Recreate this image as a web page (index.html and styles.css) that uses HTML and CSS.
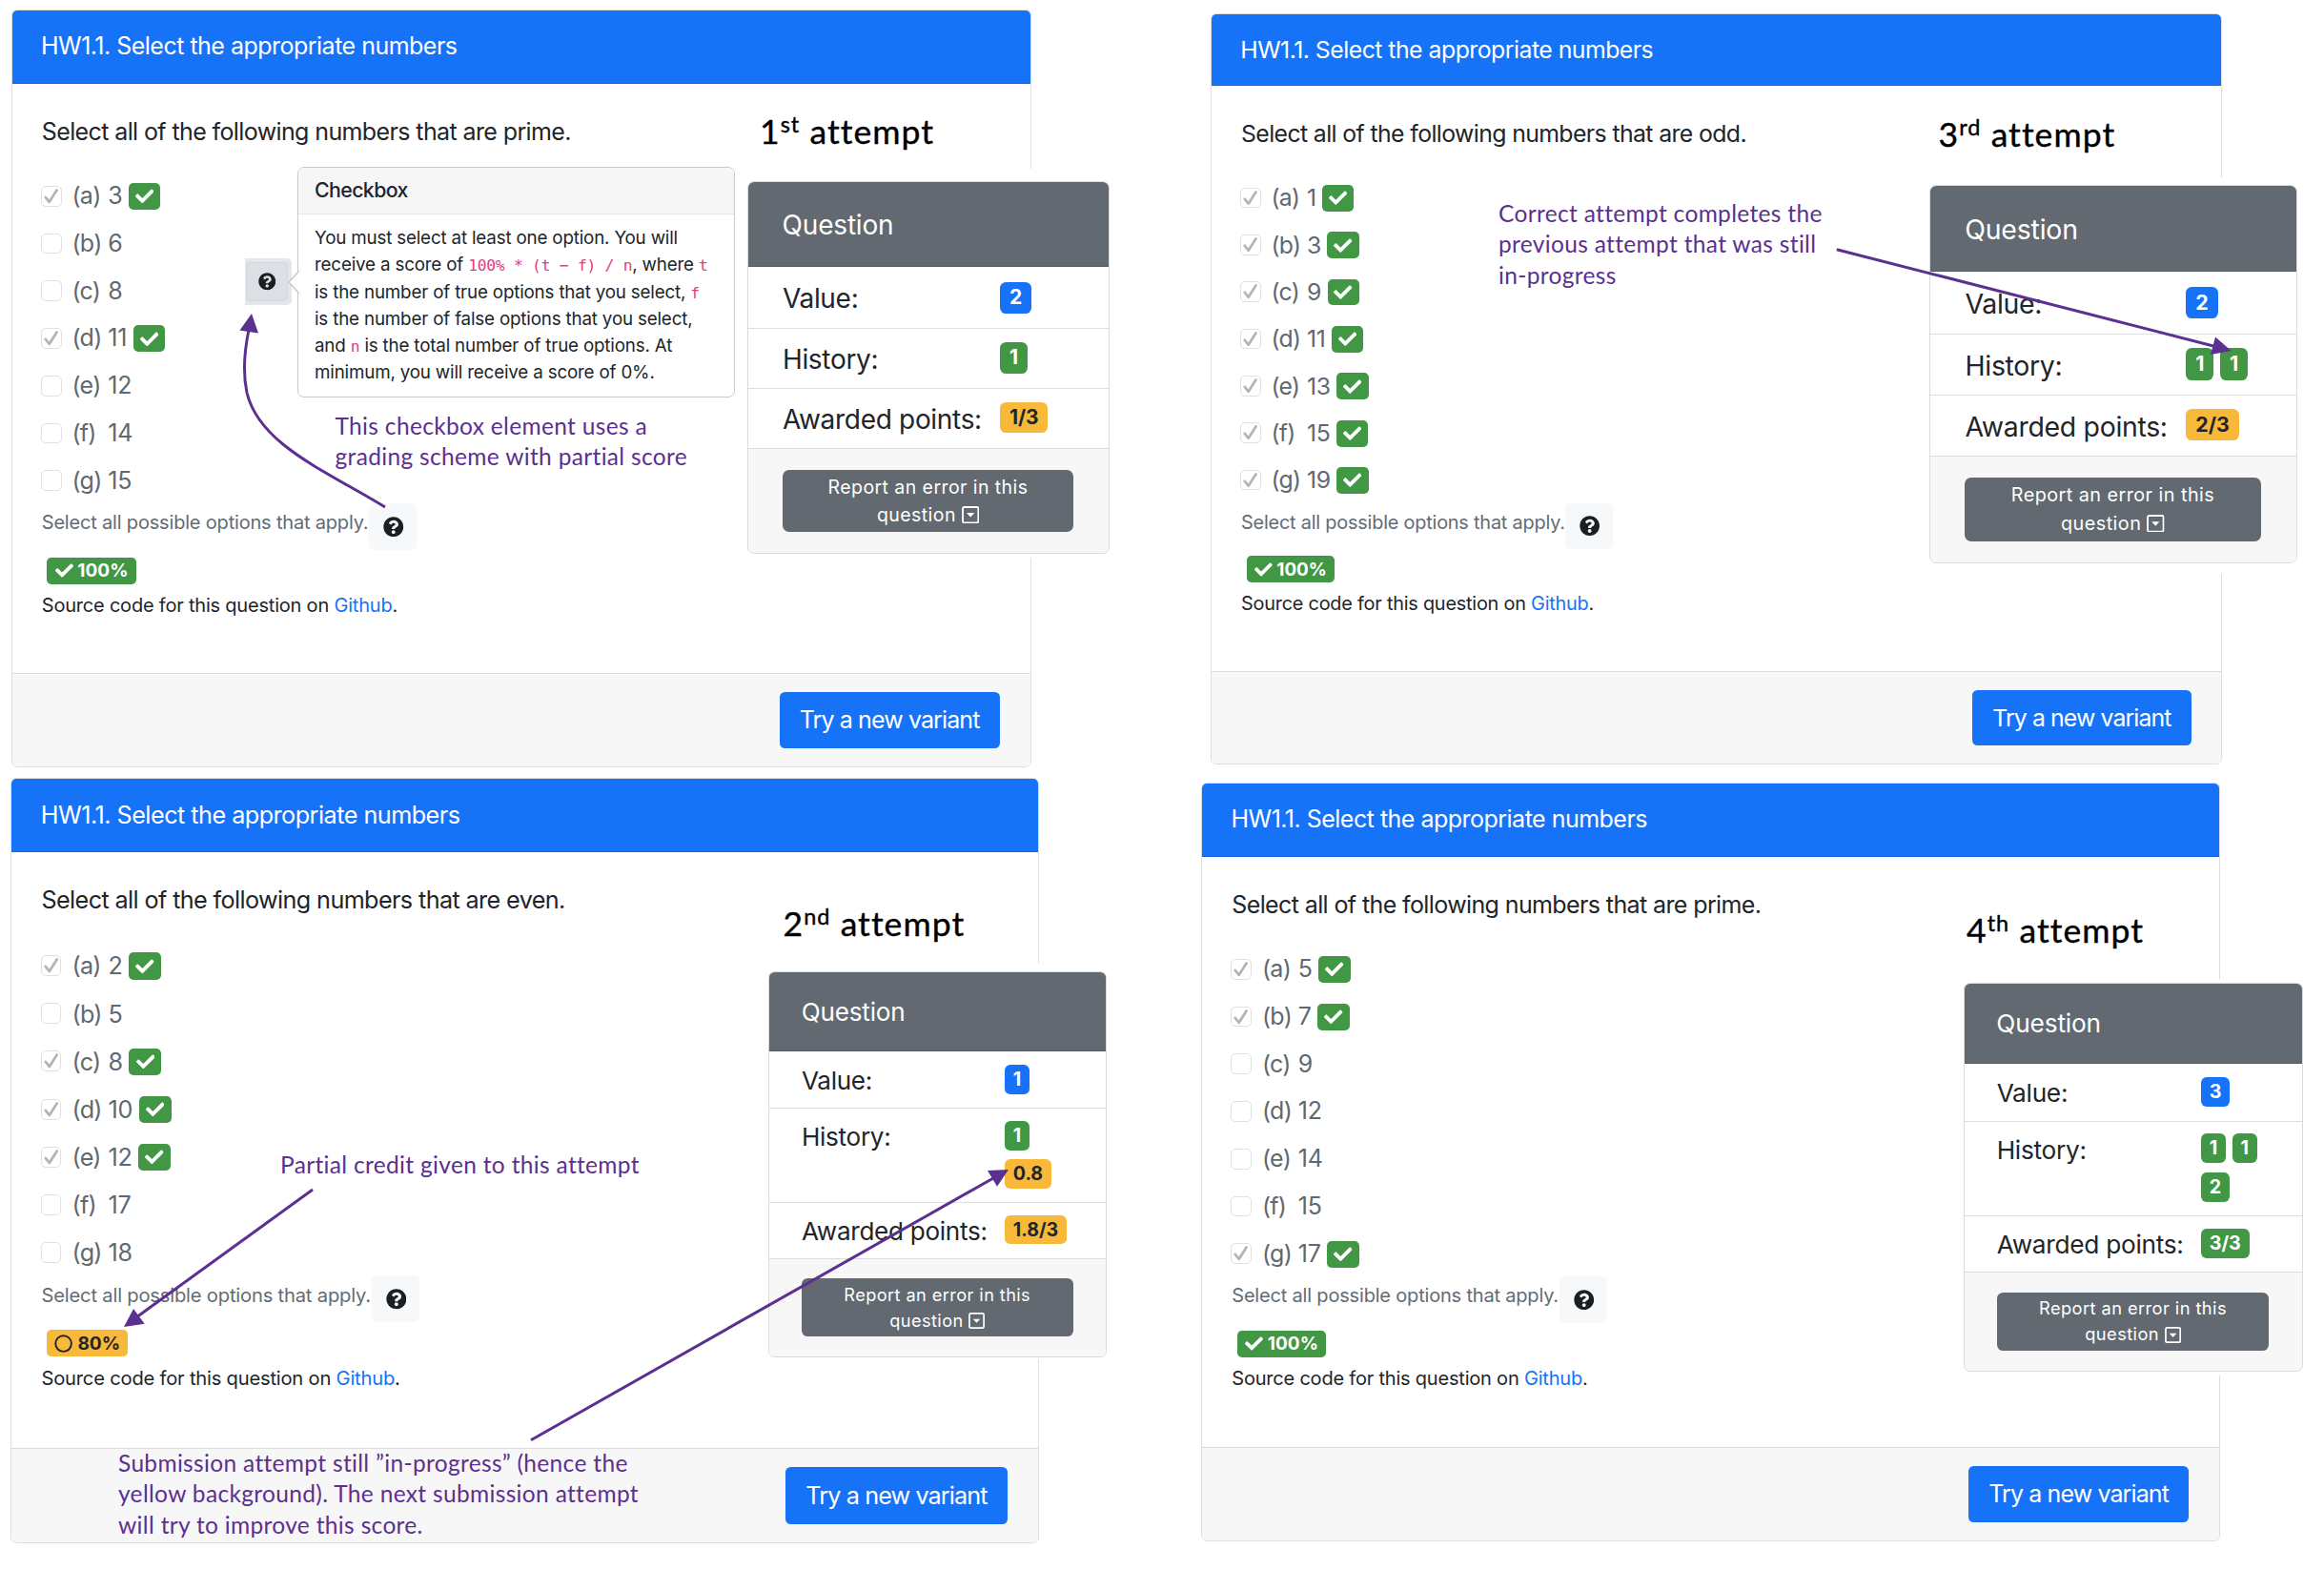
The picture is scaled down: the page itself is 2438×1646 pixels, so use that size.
FILE: index.html
```html
<!DOCTYPE html>
<html lang="en">
<head>
<meta charset="utf-8">
<title>HW1.1 attempts</title>
<link rel="stylesheet" href="styles.css">
</head>
<body>
<svg class="defs" aria-hidden="true">
  <symbol id="check" viewBox="0 0 512 512"><path d="M173.898 439.404l-166.4-166.4c-9.997-9.997-9.997-26.206 0-36.204l36.203-36.204c9.997-9.998 26.207-9.998 36.204 0L192 312.69 432.095 72.596c9.997-9.997 26.207-9.997 36.204 0l36.203 36.204c9.997 9.997 9.997 26.206 0 36.204l-294.4 294.401c-9.998 9.997-26.207 9.997-36.204-.001z" fill="currentColor"/></symbol>
  <symbol id="help" viewBox="0 0 512 512"><path d="M504 256c0 136.997-111.043 248-248 248S8 392.997 8 256C8 119.083 119.043 8 256 8s248 111.083 248 248zM262.655 90c-54.497 0-89.255 22.957-116.549 63.758-3.536 5.286-2.353 12.415 2.715 16.258l34.699 26.31c5.205 3.947 12.621 3.008 16.665-2.122 17.864-22.658 30.113-35.797 57.303-35.797 20.429 0 45.698 13.148 45.698 32.958 0 14.976-12.363 22.667-32.534 33.976C247.128 238.528 216 254.941 216 296v4c0 6.627 5.373 12 12 12h56c6.627 0 12-5.373 12-12v-1.333c0-28.462 83.186-29.647 83.186-106.667 0-58.002-60.165-102-116.531-102zM256 338c-25.365 0-46 20.635-46 46 0 25.364 20.635 46 46 46s46-20.636 46-46c0-25.364-20.635-46-46-46z" fill="currentColor"/></symbol>
  <symbol id="ring" viewBox="0 0 20 20"><circle cx="10" cy="10" r="8.7" fill="none" stroke="currentColor" stroke-width="2"/></symbol>
  <symbol id="caret" viewBox="0 0 18 18"><rect x="1" y="1" width="16" height="16" rx="1.5" fill="none" stroke="currentColor" stroke-width="1.8"/><path d="M5 7h8l-4 4.4z" fill="currentColor"/></symbol>
  <symbol id="tick" viewBox="1 1 20 20"><path d="M4.8 12L8.8 17 16.8 4.6" fill="none" stroke="#b4b4b4" stroke-width="2.8" stroke-linecap="round" stroke-linejoin="round"/></symbol>
</svg>

<main class="board">

  <section class="card card-1">
    <header class="card-head">HW1.1. Select the appropriate numbers</header>
    <div class="card-body">
      <p class="prompt">Select all of the following numbers that are prime.</p>
      <ul class="options">
        <li><span class="box"><svg><use href="#tick"/></svg></span><span class="key">(a)</span><span>3</span><b class="ok"><svg><use href="#check"/></svg></b></li>
        <li><span class="box"></span><span class="key">(b)</span><span>6</span></li>
        <li><span class="box"></span><span class="key">(c)</span><span>8</span></li>
        <li><span class="box"><svg><use href="#tick"/></svg></span><span class="key">(d)</span><span>11</span><b class="ok"><svg><use href="#check"/></svg></b></li>
        <li><span class="box"></span><span class="key">(e)</span><span>12</span></li>
        <li><span class="box"></span><span class="key">(f)</span><span>14</span></li>
        <li><span class="box"></span><span class="key">(g)</span><span>15</span></li>
      </ul>
      <div class="hint"><span>Select all possible options that apply.</span><button class="help"><svg><use href="#help"/></svg></button></div>
      <span class="score"><svg><use href="#check"/></svg>100%</span>
      <p class="source">Source code for this question on <a>Github</a>.</p>
    </div>
    <footer class="card-foot"><button class="try">Try a new variant</button></footer>
  </section>

  <section class="card card-2">
    <header class="card-head">HW1.1. Select the appropriate numbers</header>
    <div class="card-body">
      <p class="prompt">Select all of the following numbers that are even.</p>
      <ul class="options">
        <li><span class="box"><svg><use href="#tick"/></svg></span><span class="key">(a)</span><span>2</span><b class="ok"><svg><use href="#check"/></svg></b></li>
        <li><span class="box"></span><span class="key">(b)</span><span>5</span></li>
        <li><span class="box"><svg><use href="#tick"/></svg></span><span class="key">(c)</span><span>8</span><b class="ok"><svg><use href="#check"/></svg></b></li>
        <li><span class="box"><svg><use href="#tick"/></svg></span><span class="key">(d)</span><span>10</span><b class="ok"><svg><use href="#check"/></svg></b></li>
        <li><span class="box"><svg><use href="#tick"/></svg></span><span class="key">(e)</span><span>12</span><b class="ok"><svg><use href="#check"/></svg></b></li>
        <li><span class="box"></span><span class="key">(f)</span><span>17</span></li>
        <li><span class="box"></span><span class="key">(g)</span><span>18</span></li>
      </ul>
      <div class="hint"><span>Select all possible options that apply.</span><button class="help"><svg><use href="#help"/></svg></button></div>
      <span class="score warn"><svg><use href="#ring"/></svg>80%</span>
      <p class="source">Source code for this question on <a>Github</a>.</p>
    </div>
    <footer class="card-foot"><button class="try">Try a new variant</button></footer>
  </section>

  <section class="card card-3">
    <header class="card-head">HW1.1. Select the appropriate numbers</header>
    <div class="card-body">
      <p class="prompt">Select all of the following numbers that are odd.</p>
      <ul class="options">
        <li><span class="box"><svg><use href="#tick"/></svg></span><span class="key">(a)</span><span>1</span><b class="ok"><svg><use href="#check"/></svg></b></li>
        <li><span class="box"><svg><use href="#tick"/></svg></span><span class="key">(b)</span><span>3</span><b class="ok"><svg><use href="#check"/></svg></b></li>
        <li><span class="box"><svg><use href="#tick"/></svg></span><span class="key">(c)</span><span>9</span><b class="ok"><svg><use href="#check"/></svg></b></li>
        <li><span class="box"><svg><use href="#tick"/></svg></span><span class="key">(d)</span><span>11</span><b class="ok"><svg><use href="#check"/></svg></b></li>
        <li><span class="box"><svg><use href="#tick"/></svg></span><span class="key">(e)</span><span>13</span><b class="ok"><svg><use href="#check"/></svg></b></li>
        <li><span class="box"><svg><use href="#tick"/></svg></span><span class="key">(f)</span><span>15</span><b class="ok"><svg><use href="#check"/></svg></b></li>
        <li><span class="box"><svg><use href="#tick"/></svg></span><span class="key">(g)</span><span>19</span><b class="ok"><svg><use href="#check"/></svg></b></li>
      </ul>
      <div class="hint"><span>Select all possible options that apply.</span><button class="help"><svg><use href="#help"/></svg></button></div>
      <span class="score"><svg><use href="#check"/></svg>100%</span>
      <p class="source">Source code for this question on <a>Github</a>.</p>
    </div>
    <footer class="card-foot"><button class="try">Try a new variant</button></footer>
  </section>

  <section class="card card-4">
    <header class="card-head">HW1.1. Select the appropriate numbers</header>
    <div class="card-body">
      <p class="prompt">Select all of the following numbers that are prime.</p>
      <ul class="options">
        <li><span class="box"><svg><use href="#tick"/></svg></span><span class="key">(a)</span><span>5</span><b class="ok"><svg><use href="#check"/></svg></b></li>
        <li><span class="box"><svg><use href="#tick"/></svg></span><span class="key">(b)</span><span>7</span><b class="ok"><svg><use href="#check"/></svg></b></li>
        <li><span class="box"></span><span class="key">(c)</span><span>9</span></li>
        <li><span class="box"></span><span class="key">(d)</span><span>12</span></li>
        <li><span class="box"></span><span class="key">(e)</span><span>14</span></li>
        <li><span class="box"></span><span class="key">(f)</span><span>15</span></li>
        <li><span class="box"><svg><use href="#tick"/></svg></span><span class="key">(g)</span><span>17</span><b class="ok"><svg><use href="#check"/></svg></b></li>
      </ul>
      <div class="hint"><span>Select all possible options that apply.</span><button class="help"><svg><use href="#help"/></svg></button></div>
      <span class="score"><svg><use href="#check"/></svg>100%</span>
      <p class="source">Source code for this question on <a>Github</a>.</p>
    </div>
    <footer class="card-foot"><button class="try">Try a new variant</button></footer>
  </section>

  <div class="mat mat-1">
    <aside class="panel">
      <header class="panel-head">Question</header>
      <div class="row first"><span class="label">Value:</span><span class="vals"><b class="tag blue">2</b></span></div>
      <div class="row"><span class="label">History:</span><span class="vals"><b class="tag">1</b></span></div>
      <div class="row"><span class="label">Awarded points:</span><span class="vals"><b class="tag yellow">1/3</b></span></div>
      <footer class="panel-foot"><button class="report">Report an error in this<br>question <svg><use href="#caret"/></svg></button></footer>
    </aside>
  </div>

  <div class="mat mat-2">
    <aside class="panel">
      <header class="panel-head">Question</header>
      <div class="row first"><span class="label">Value:</span><span class="vals"><b class="tag blue">1</b></span></div>
      <div class="row"><span class="label">History:</span><span class="vals"><b class="tag">1</b><b class="tag yellow">0.8</b></span></div>
      <div class="row"><span class="label">Awarded points:</span><span class="vals"><b class="tag yellow">1.8/3</b></span></div>
      <footer class="panel-foot"><button class="report">Report an error in this<br>question <svg><use href="#caret"/></svg></button></footer>
    </aside>
  </div>

  <div class="mat mat-3">
    <aside class="panel">
      <header class="panel-head">Question</header>
      <div class="row first"><span class="label">Value:</span><span class="vals"><b class="tag blue">2</b></span></div>
      <div class="row"><span class="label">History:</span><span class="vals"><b class="tag">1</b><b class="tag">1</b></span></div>
      <div class="row"><span class="label">Awarded points:</span><span class="vals"><b class="tag yellow">2/3</b></span></div>
      <footer class="panel-foot"><button class="report">Report an error in this<br>question <svg><use href="#caret"/></svg></button></footer>
    </aside>
  </div>

  <div class="mat mat-4">
    <aside class="panel">
      <header class="panel-head">Question</header>
      <div class="row first"><span class="label">Value:</span><span class="vals"><b class="tag blue">3</b></span></div>
      <div class="row"><span class="label">History:</span><span class="vals"><b class="tag">1</b><b class="tag">1</b><b class="tag">2</b></span></div>
      <div class="row"><span class="label">Awarded points:</span><span class="vals"><b class="tag">3/3</b></span></div>
      <footer class="panel-foot"><button class="report">Report an error in this<br>question <svg><use href="#caret"/></svg></button></footer>
    </aside>
  </div>

  <button class="popover-btn"><span><svg><use href="#help"/></svg></span></button>
  <div class="popover">
    <header>Checkbox</header>
    <p>You must select at least one option. You will<br>receive a score of <code>100% * (t − f) / n</code>, where <code>t</code><br>is the number of true options that you select, <code>f</code><br>is the number of false options that you select,<br>and <code>n</code> is the total number of true options. At<br>minimum, you will receive a score of 0%.</p>
    <svg class="tip" viewBox="0 0 12 24"><path d="M12 0L1 12l11 12z" fill="#fff"/><path d="M12 0L1 12l11 12" fill="none" stroke="#c6c6c6" stroke-width="1.4"/></svg>
  </div>

  <h2 class="nth nth-1">1<sup>st</sup> attempt</h2>
  <h2 class="nth nth-2">2<sup>nd</sup> attempt</h2>
  <h2 class="nth nth-3">3<sup>rd</sup> attempt</h2>
  <h2 class="nth nth-4">4<sup>th</sup> attempt</h2>

  <p class="note note-1">This checkbox element uses a<br>grading scheme with partial score</p>
  <p class="note note-2">Partial credit given to this attempt</p>
  <p class="note note-3">Submission attempt still ”in-progress” (hence the<br>yellow background). The next submission attempt<br>will try to improve this score.</p>
  <p class="note note-4">Correct attempt completes the<br>previous attempt that was still<br>in-progress</p>

  <svg class="arrows" viewBox="0 0 2438 1646">
    <path class="line" d="M404 532C340 493 272 466 259 412C255 393 256 370 261 346"/>
    <path class="tip-fill" d="M264 329L251.5 346.5L271 349.5z"/>
    <path class="line" d="M328 1248L143 1382"/>
    <path class="tip-fill" d="M130 1392L140 1373L151.7 1388.7z"/>
    <path class="line" d="M557 1510.7L1042 1236"/>
    <path class="tip-fill" d="M1058 1227L1036 1228L1046 1244.7z"/>
    <path class="line" d="M1926.8 261.7L2322 363"/>
    <path class="tip-fill" d="M2340.7 368L2324 353.5L2319 372z"/>
  </svg>
</main>
</body>
</html>
```
FILE: styles.css
```css
* { box-sizing: border-box; }
body { margin: 0; background: #fff; font-family: Inter, "Liberation Sans", sans-serif; color: #212529; }
.board { position: relative; width: 2438px; height: 1646px; overflow: hidden; }
.defs { position: absolute; width: 0; height: 0; }
button { font-family: inherit; border: 0; padding: 0; margin: 0; }
p, ul, h2 { margin: 0; padding: 0; }
svg { display: block; }

/* Question cards */
.card { position: absolute; display: flex; flex-direction: column; background: #fff; border: 1.6px solid #dedede; border-radius: .25em; }
.card-1 { left: 11.5px; top: 10px; width: 1070px; height: 794.5px; font-size: 25px; }
.card-2 { left: 11px; top: 816px; width: 1079px; height: 802.5px; font-size: 25.2px; }
.card-3 { left: 1270px; top: 13.5px; width: 1061px; height: 788px; font-size: 24.8px; }
.card-4 { left: 1260px; top: 821px; width: 1069px; height: 795.5px; font-size: 25px; }
.card-head { height: 3.06em; line-height: 3.02em; padding-left: 1.22em; color: #fff; background: #1673f8; border-bottom: 1.6px solid #1566d9; border-radius: .2em .2em 0 0; letter-spacing: -.0205em; }
.card-body { flex: 1; display: flex; flex-direction: column; align-items: flex-start; padding: 1.28em 0 0 1.25em; }
.prompt { line-height: 1.5em; letter-spacing: -.0244em; white-space: nowrap; }
.options { list-style: none; margin-top: .965em; }
.options li { display: flex; align-items: center; height: 1.99em; line-height: 1.99em; color: #5f6971; letter-spacing: -.03em; }
.box { width: .87em; height: .87em; margin: -.03em .44em 0 -.04em; background: #fff; border: 1.5px solid #e0e0e0; border-radius: .2em; }
.box svg { width: 100%; height: 100%; overflow: visible; }
.key { width: 1.51em; }
.key + span { letter-spacing: -.01em; }
.ok { display: flex; align-items: center; justify-content: center; width: 1.34em; height: 1.12em; margin-left: .26em; border-radius: .2em; background: #429745; color: #fff; }
.ok svg { width: .78em; height: .78em; }
.hint { display: flex; height: 1.94em; margin-top: -.04em; color: #636c74; }
.hint span { font-size: .8em; line-height: 2.05em; letter-spacing: -.0092em; white-space: nowrap; }
.help { width: 2em; height: 1.94em; margin-left: .03em; font-size: 1em; border-radius: .2em; background: #f7f8fa; color: #1c1f22; display: flex; align-items: center; justify-content: center; }
.help svg { width: .86em; height: .86em; margin-left: .05em; }
.score { display: flex; align-items: center; gap: .25em; height: 1.475em; margin: .41em 0 0 .3em; padding: 0 .43em; border-radius: .25em; font-size: .76em; font-weight: 700; color: #fff; background: #429745; }
.score svg { width: 1em; height: 1em; }
.score.warn { color: #212529; background: #f8b93a; }
.source { margin-top: .38em; font-size: .8em; line-height: 1.5em; letter-spacing: -.0102em; white-space: nowrap; }
.source a { color: #1673f8; }
.card-foot { height: 3.9em; display: flex; justify-content: flex-end; padding: .76em 1.27em 0 0; background: #f7f7f7; border-top: 1.6px solid #dcdcdc; border-radius: 0 0 .2em .2em; }
.try { width: 9.25em; height: 2.35em; font-size: 1em; letter-spacing: -.0355em; text-align: center; color: #fff; background: #1673f8; border-radius: .22em; }

/* Score panels */
.mat { position: absolute; background: #fff; }
.mat-1 { left: 783.5px; top: 177px; width: 380px; padding: 13px 0 4px; font-size: 28px; }
.mat-2 { left: 806px; top: 1010.5px; width: 354.5px; padding: 8px 0 2px; font-size: 26.1px; }
.mat-3 { left: 2023.5px; top: 185.7px; width: 386px; padding: 8px 0 11px; font-size: 28.45px; }
.mat-4 { left: 2059.5px; top: 1026.7px; width: 356px; padding: 4.3px 0 4px; font-size: 26.25px; }
.panel { border: 1.8px solid #dadada; border-radius: .25em; overflow: hidden; background: #fff; }
.panel-head { height: 3.19em; line-height: 3.23em; padding-left: 1.29em; color: #fff; background: #626970; border-bottom: 1.6px solid #555c63; letter-spacing: -.007em; }
.row { display: grid; grid-template-columns: 8.155em 1fr; align-items: start; min-height: 2.232em; padding: 0 1.2em .54em 1.3em; border-top: 1.6px solid #dcdfe2; }
.row.first { border-top: 0; min-height: 2.28em; }
.label { height: 1.6em; line-height: 2.29em; letter-spacing: -.011em; white-space: nowrap; }
.vals { display: flex; flex-wrap: wrap; gap: .37em .24em; padding-top: .49em; width: 5em; }
.first .vals { padding-top: .55em; }
.first .label { line-height: 2.38em; }
.tag { height: 1.565em; line-height: 1.565em; padding: 0 .46em; border-radius: .3em; font-size: .75em; font-weight: 700; color: #fff; background: #429745; }
.vals .tag { flex: none; }
.mat-2 .vals { width: 3em; }
.mat-4 .vals { width: 3.2em; }
.mat-2 .row:nth-child(4) .vals { width: 5em; }
.blue { background: #1673f8; }
.yellow { color: #212529; background: #f8b93a; }
.panel-foot { height: 3.96em; padding: .8em 1.3em 0; background: #f7f7f7; border-top: 1.6px solid #dcdcdc; }
.report { display: block; width: 100%; height: 3.36em; font-size: .696em; line-height: 1.49em; letter-spacing: .023em; border-radius: .35em; background: #626970; color: #fff; }
.report svg { display: inline-block; width: .94em; height: .94em; vertical-align: -.13em; }

/* Popover */
.popover-btn { position: absolute; left: 257px; top: 270.5px; width: 48.5px; height: 49.5px; padding: 4.5px 4px 4px 1px; background: #e5e6e8; border-radius: 0 5px 5px 0; color: #1c1f22; }
.popover-btn span { display: flex; align-items: center; justify-content: center; height: 100%; background: #dae0e6; border: 1px solid #d0d8e0; border-radius: 4px; }
.popover-btn svg { width: 18.5px; height: 18.5px; }
.popover { position: absolute; left: 312px; top: 175px; width: 459px; height: 241.5px; background: #fff; border: 1.5px solid #c9c9c9; border-radius: 7px; font-size: 18.8px; line-height: 28.25px; letter-spacing: -.0095em; white-space: nowrap; }
.popover header { height: 48.5px; padding-left: 17px; line-height: 47px; font-size: 21.3px; font-weight: 500; letter-spacing: -.028em; background: #f6f6f6; border-bottom: 1.5px solid #e6e6e6; border-radius: 6px 6px 0 0; }
.popover p { padding: 11.5px 0 0 17px; }
.popover code { font-family: "DejaVu Sans Mono", "Liberation Mono", monospace; font-size: 16.3px; line-height: 1; letter-spacing: -.015em; color: #e0407f; }
.tip { position: absolute; left: -11px; top: 108px; width: 12px; height: 24px; }

/* Headings, notes and arrows laid over the cards */
.nth { position: absolute; font: 400 35.5px/40px Lato, sans-serif; letter-spacing: .03em; color: #000; white-space: nowrap; -webkit-text-stroke: .4px #000; }
.nth sup { font-size: .66em; line-height: 0; vertical-align: .5em; }
.nth-1 { left: 797px; top: 118px; }
.nth-2 { left: 821.5px; top: 949px; }
.nth-3 { left: 2033.5px; top: 121px; }
.nth-4 { left: 2063px; top: 956px; }
.note { position: absolute; font: 400 24.5px/32.3px Lato, sans-serif; letter-spacing: .0136em; color: #5b3090; white-space: nowrap; }
.note-1 { left: 351.5px; top: 431px; }
.note-2 { left: 294px; top: 1205.5px; }
.note-3 { left: 124px; top: 1519px; }
.note-4 { left: 1572px; top: 208px; }
.arrows { position: absolute; inset: 0; width: 2438px; height: 1646px; pointer-events: none; }
.line { fill: none; stroke: #5b3090; stroke-width: 3; }
.tip-fill { fill: #5b3090; }
```
